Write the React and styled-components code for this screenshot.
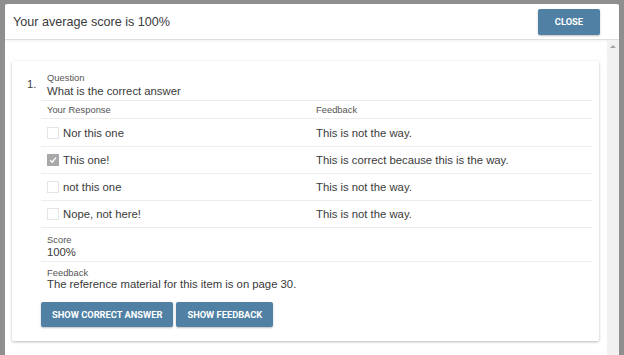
import React from 'react';
import styled, { createGlobalStyle } from 'styled-components';

const GlobalStyle = createGlobalStyle`
  body {
    margin: 0;
    background: #8f8f8f;
    font-family: "Liberation Sans", Arial, sans-serif;
    color: #333;
  }
`;

const Page = styled.div`
  height: 355px;
  padding: 4px 5px 0 5px;
  box-sizing: border-box;
  overflow: hidden;
`;

const Dialog = styled.div`
  height: 100%;
  background: #fff;
  border-radius: 2px 2px 0 0;
  display: flex;
  flex-direction: column;
`;

const Header = styled.div`
  height: 35px;
  flex: none;
  display: flex;
  align-items: center;
  justify-content: space-between;
  padding: 0 19px 0 8px;
  border-bottom: 1px solid #dedede;
  box-shadow: 0 1px 2px rgba(0, 0, 0, 0.06);
`;

const Title = styled.h2`
  margin: 0;
  font-size: 12.6px;
  font-weight: normal;
  color: #3a3a3a;
`;

const Button = styled.button`
  height: ${(p) => p.$h || 25}px;
  padding: 0 ${(p) => p.$px || 11}px;
  border: none;
  border-radius: 2px;
  background: #5081a4;
  color: #fff;
  font-family: Roboto, "Liberation Sans", sans-serif;
  font-size: 9.3px;
  font-weight: 700;
  text-transform: uppercase;
  box-shadow: 0 1px 2px rgba(0, 0, 0, 0.25);
  cursor: pointer;
`;

const Body = styled.div`
  flex: 1;
  display: flex;
  min-height: 0;
`;

const Content = styled.div`
  flex: 1;
  padding: 21px 8px 0 7px;
  overflow: hidden;
`;

const Scrollbar = styled.div`
  width: 12px;
  flex: none;
  background: #f1f1f1;
  display: flex;
  justify-content: center;
  padding-top: 5px;
  box-sizing: border-box;
`;

const Arrow = styled.div`
  width: 0;
  height: 0;
  border-left: 3px solid transparent;
  border-right: 3px solid transparent;
  border-bottom: 3px solid #a3a3a3;
`;

const Card = styled.div`
  background: #fff;
  box-shadow: 0 1px 3px rgba(0, 0, 0, 0.28);
  border-radius: 2px;
  padding: 11px 7px 14px 15px;
  display: flex;
`;

const Number = styled.div`
  width: 14px;
  flex: none;
  font-size: 11.3px;
  color: #444;
  padding-top: 6px;
`;

const Main = styled.div`
  flex: 1;
`;

const Block = styled.div`
  padding: ${(p) => p.$pt || 0}px 6px 0;
  height: ${(p) => p.$h}px;
  box-sizing: border-box;
  border-bottom: ${(p) => (p.$line ? '1px solid #ededed' : 'none')};
`;

const Label = styled.div`
  font-size: 9.4px;
  color: #555;
  line-height: 12px;
`;

const Value = styled.div`
  font-size: 11.3px;
  color: #3a3a3a;
  line-height: ${(p) => p.$lh || 14}px;
`;

const Row = styled.div`
  display: grid;
  grid-template-columns: 269px 1fr;
  align-items: center;
  height: ${(p) => p.$h}px;
  border-bottom: 1px solid #ededed;
  box-sizing: border-box;
`;

const Cell = styled.div`
  padding: 0 6px;
  display: flex;
  align-items: center;
  gap: 4px;
  font-size: ${(p) => (p.$head ? 9.4 : 11.3)}px;
  color: ${(p) => (p.$head ? '#555' : '#3a3a3a')};
`;

const Box = styled.span`
  width: 12px;
  height: 12px;
  box-sizing: border-box;
  border: 1px solid ${(p) => (p.$checked ? '#a8a8a8' : '#e4e4e4')};
  background: ${(p) => (p.$checked ? '#a8a8a8' : '#fff')};
  display: inline-flex;
  align-items: center;
  justify-content: center;
  flex: none;
`;

const Actions = styled.div`
  display: flex;
  gap: 3px;
  margin-top: 13px;
`;

const answers = [
  { text: 'Nor this one', feedback: 'This is not the way.' },
  { text: 'This one!', feedback: 'This is correct because this is the way.', checked: true },
  { text: 'not this one', feedback: 'This is not the way.' },
  { text: 'Nope, not here!', feedback: 'This is not the way.' },
];

const Check = () => (
  <svg width="8" height="8" viewBox="0 0 8 8">
    <path d="M1.2 4.3 L3.2 6.2 L6.9 1.6" fill="none" stroke="#fff" strokeWidth="1.3" />
  </svg>
);

export default function App() {
  return (
    <>
      <GlobalStyle />
      <Page>
        <Dialog>
          <Header>
            <Title>Your average score is 100%</Title>
            <Button $h={26} $px={17}>Close</Button>
          </Header>
          <Body>
            <Content>
              <Card>
                <Number>1.</Number>
                <Main>
                  <Block $h={29} $line>
                    <Label>Question</Label>
                    <Value $lh={15}>What is the correct answer</Value>
                  </Block>
                  <Row $h={18}>
                    <Cell $head>Your Response</Cell>
                    <Cell $head>Feedback</Cell>
                  </Row>
                  {answers.map((a, i) => (
                    <Row key={i} $h={i === 0 ? 28 : 27}>
                      <Cell>
                        <Box $checked={a.checked}>{a.checked && <Check />}</Box>
                        {a.text}
                      </Cell>
                      <Cell>{a.feedback}</Cell>
                    </Row>
                  ))}
                  <Block $h={34} $pt={6} $line>
                    <Label>Score</Label>
                    <Value $lh={12}>100%</Value>
                  </Block>
                  <Block $h={27} $pt={5}>
                    <Label>Feedback</Label>
                    <Value $lh={10}>The reference material for this item is on page 30.</Value>
                  </Block>
                  <Actions>
                    <Button>Show correct answer</Button>
                    <Button>Show feedback</Button>
                  </Actions>
                </Main>
              </Card>
            </Content>
            <Scrollbar>
              <Arrow />
            </Scrollbar>
          </Body>
        </Dialog>
      </Page>
    </>
  );
}
